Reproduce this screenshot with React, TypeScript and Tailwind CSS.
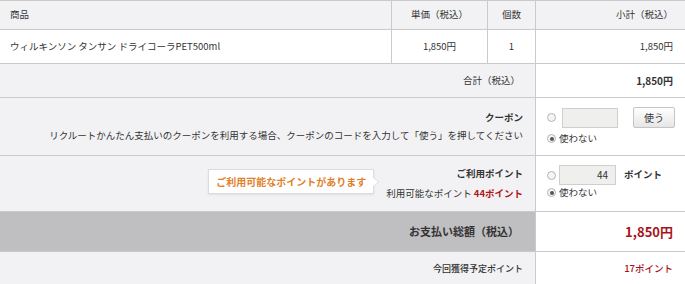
import { FC } from "react";

const Radio: FC<{ checked?: boolean }> = ({ checked }) => (
  <span className="inline-flex items-center justify-center w-[9px] h-[9px] rounded-full border border-[#b5b5b5] bg-[#f4f4f4] shrink-0">
    {checked && <span className="w-[4px] h-[4px] rounded-full bg-[#555]" />}
  </span>
);

const App: FC = () => {
  return (
    <div
      className="w-[685px] h-[284px] bg-[#f2f2f4] text-[#333] text-[9.5px] leading-none overflow-hidden"
      style={{ fontFamily: '"Noto Sans CJK JP", "Noto Sans", sans-serif' }}
    >
      {/* header */}
      <div className="flex h-[30px] border-y border-[#cacaca]">
        <div className="w-[391px] flex items-center pl-[10px]">商品</div>
        <div className="w-[96px] flex items-center justify-center border-l border-[#cacaca]">単価（税込）</div>
        <div className="w-[48px] flex items-center justify-center border-l border-[#cacaca]">個数</div>
        <div className="flex-1 flex items-center justify-end pr-[12px] border-l border-[#cacaca]">小計（税込）</div>
      </div>

      {/* item */}
      <div className="flex h-[34px] border-b border-[#cacaca] bg-white">
        <div className="w-[391px] flex items-center pl-[10px]">ウィルキンソン タンサン ドライコーラPET500ml</div>
        <div className="w-[96px] flex items-center justify-center border-l border-[#cacaca]">1,850円</div>
        <div className="w-[48px] flex items-center justify-center border-l border-[#cacaca]">1</div>
        <div className="flex-1 flex items-center justify-end pr-[12px] border-l border-[#cacaca]">1,850円</div>
      </div>

      {/* total */}
      <div className="flex h-[34px] border-b border-[#cacaca]">
        <div className="w-[535px] flex items-center justify-end pr-[15px]">合計（税込）</div>
        <div className="flex-1 flex items-center justify-end pr-[12px] border-l border-[#cacaca] bg-white font-bold text-[10px]">1,850円</div>
      </div>

      {/* coupon */}
      <div className="flex h-[58px] border-b border-[#cacaca]">
        <div className="w-[535px] flex flex-col items-end justify-center pr-[12px] gap-[9px]">
          <span className="font-bold">クーポン</span>
          <span>リクルートかんたん支払いのクーポンを利用する場合、クーポンのコードを入力して「使う」を押してください</span>
        </div>
        <div className="flex-1 border-l border-[#cacaca] bg-white pl-[11px] pt-[9px]">
          <div className="flex items-center">
            <Radio />
            <span className="ml-[6px] w-[56px] h-[20px] border border-[#cfcfcf] bg-[#efefed]" />
            <button className="ml-[15px] w-[42px] h-[21px] rounded-[2px] border border-[#c4c4c4] bg-gradient-to-b from-white to-[#e6e6e6] text-[10px] text-[#333]">
              使う
            </button>
          </div>
          <div className="flex items-center mt-[6px]">
            <Radio checked />
            <span className="ml-[3px]">使わない</span>
          </div>
        </div>
      </div>

      {/* points */}
      <div className="flex h-[56px] border-b border-[#cacaca]">
        <div className="w-[535px] flex items-center justify-end pr-[12px]">
          <div className="relative mr-[12px] mt-[-4px] h-[25px] flex items-center px-[7px] bg-white border border-[#dcdcdc] shadow-[0_1px_2px_rgba(0,0,0,0.08)] text-[10px] font-bold text-[#e0802a]">
            ご利用可能なポイントがあります
            <span className="absolute right-[-6px] top-[7px] w-0 h-0 border-y-[5px] border-y-transparent border-l-[6px] border-l-[#dcdcdc]" />
            <span className="absolute right-[-5px] top-[7px] w-0 h-0 border-y-[5px] border-y-transparent border-l-[6px] border-l-white" />
          </div>
          <div className="flex flex-col items-end gap-[10px]">
            <span className="font-bold">ご利用ポイント</span>
            <span>
              利用可能なポイント <span className="font-bold text-[#b3141b]">44ポイント</span>
            </span>
          </div>
        </div>
        <div className="flex-1 border-l border-[#cacaca] bg-white pl-[11px] pt-[9px]">
          <div className="flex items-center">
            <Radio />
            <span className="ml-[3px] w-[57px] h-[20px] border border-[#cfcfcf] bg-[#efefed] flex items-center justify-end pr-[7px] text-[10px]">
              44
            </span>
            <span className="ml-[8px] font-bold">ポイント</span>
          </div>
          <div className="flex items-center mt-[3px]">
            <Radio checked />
            <span className="ml-[3px]">使わない</span>
          </div>
        </div>
      </div>

      {/* payment total */}
      <div className="flex h-[40px] border-b border-[#cacaca]">
        <div className="w-[535px] flex items-center justify-end pr-[16px] bg-[#bfbfc1] text-[11px] font-bold text-[#333]">
          お支払い総額（税込）
        </div>
        <div className="flex-1 flex items-center justify-end pr-[12px] border-l border-[#cacaca] bg-white font-bold text-[13px] text-[#a8141a]">
          1,850円
        </div>
      </div>

      {/* earned points */}
      <div className="flex h-[33px]">
        <div className="w-[535px] flex items-center justify-end pr-[12px] text-[9px] font-medium">今回獲得予定ポイント</div>
        <div className="flex-1 flex items-center justify-end pr-[12px] border-l border-[#cacaca] bg-white text-[#a8141a] text-[9.5px] font-medium">
          17ポイント
        </div>
      </div>
    </div>
  );
};

export default App;
